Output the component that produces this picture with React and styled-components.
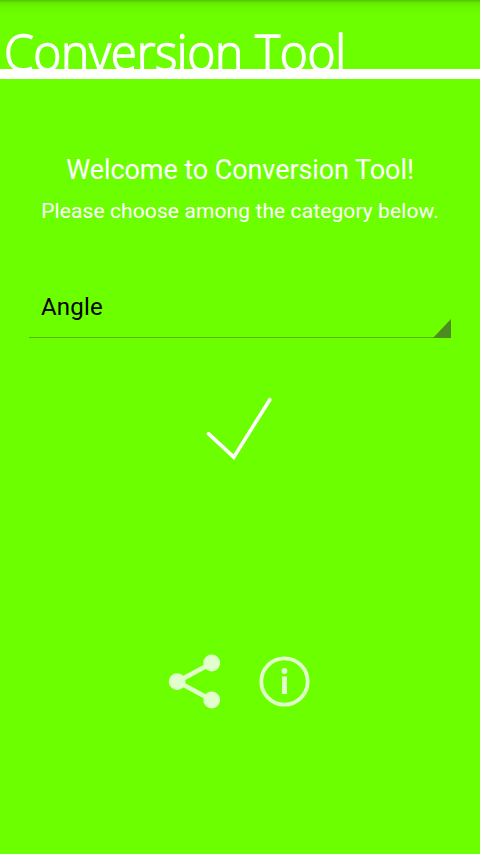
import React, { useState } from "react";
import styled, { createGlobalStyle } from "styled-components";

const GlobalStyle = createGlobalStyle`
  body {
    margin: 0;
    background: #6cff00;
  }
`;

const Container = styled.div`
  width: 480px;
  height: 854px;
  display: flex;
  flex-direction: column;
  align-items: center;
  background: linear-gradient(to bottom, #55c800 0, #55c800 1px, #61e600 2px, #68f600 6px, #6cff00 16px);
  font-family: Roboto, sans-serif;
  overflow: hidden;
`;

const Header = styled.header`
  width: 100%;
  height: 79px;
  box-sizing: border-box;
  padding: 18px 0 0 4px;
  border-bottom: 10px solid #fff;
`;

const Title = styled.h1`
  margin: 0;
  font-family: "Open Sans", sans-serif;
  font-weight: 300;
  font-size: 50px;
  line-height: 68px;
  letter-spacing: -0.4px;
  white-space: nowrap;
  color: #fff;
  transform: scaleX(0.959);
  transform-origin: left;
  -webkit-text-stroke: 1.4px #fff;
`;

const Welcome = styled.h2`
  margin: 74px 0 0;
  font-weight: 400;
  font-size: 27px;
  line-height: 34px;
  letter-spacing: -0.08px;
  white-space: nowrap;
  color: #fff;
`;

const Hint = styled.p`
  margin: 11px 0 0;
  font-size: 21px;
  line-height: 26px;
  letter-spacing: 0.1px;
  white-space: nowrap;
  color: #fff;
`;

const Spinner = styled.button`
  width: 422px;
  height: 59px;
  margin: 55px 0 0;
  padding: 0 0 0 12px;
  display: flex;
  justify-content: space-between;
  align-items: flex-end;
  border: none;
  border-bottom: 1px solid #57b813;
  background: none;
  font-family: Roboto, sans-serif;
  font-size: 24px;
  letter-spacing: 0.2px;
  color: #000;
`;

const Category = styled.span`
  line-height: 28px;
  margin-bottom: 16px;
`;

const Corner = styled.span`
  width: 18px;
  height: 19px;
  margin-bottom: -1px;
  background: #4c8c20;
  clip-path: polygon(100% 0, 100% 100%, 0 100%);
`;

const ConfirmButton = styled.button`
  display: flex;
  margin: 56px 0 0;
  padding: 0;
  border: none;
  background: none;
`;

const Footer = styled.footer`
  display: flex;
  gap: 30px;
  margin-top: 181px;
`;

const Icon = styled.svg`
  display: block;
  width: ${(props) => props.$size}px;
  height: ${(props) => props.$size}px;
  overflow: visible;
`;

const App = () => {
  const [category] = useState("Angle");

  return (
    <Container>
      <GlobalStyle />
      <Header>
        <Title>Conversion Tool</Title>
      </Header>
      <Welcome>Welcome to Conversion Tool!</Welcome>
      <Hint>Please choose among the category below.</Hint>
      <Spinner>
        <Category>{category}</Category>
        <Corner />
      </Spinner>
      <ConfirmButton aria-label="Confirm">
        <Icon $size={70} viewBox="0 0 70 70" fill="none" stroke="#fff" strokeWidth="3.6">
          <path d="M3.4 39.6 28.8 63.1 64.8 5.7" strokeLinecap="round" />
        </Icon>
      </ConfirmButton>
      <Footer>
        <Icon $size={60} viewBox="0 0 60 60" fill="#e1ffcc">
          <path d="M46.7 18.2 12.2 36.6 46.7 55" fill="none" stroke="#e1ffcc" strokeWidth="4.6" />
          <circle cx="46.7" cy="18" r="8.4" />
          <circle cx="12.2" cy="36.6" r="8.4" />
          <circle cx="46.7" cy="55" r="8.4" />
        </Icon>
        <Icon $size={60} viewBox="0 0 60 60" fill="#e1ffcc">
          <circle cx="29.5" cy="36.5" r="23.2" fill="none" stroke="#e1ffcc" strokeWidth="3.8" />
          <circle cx="29.5" cy="26" r="2.9" />
          <path d="M27 31.5h5v17.5h-5z" />
        </Icon>
      </Footer>
    </Container>
  );
};

export default App;
